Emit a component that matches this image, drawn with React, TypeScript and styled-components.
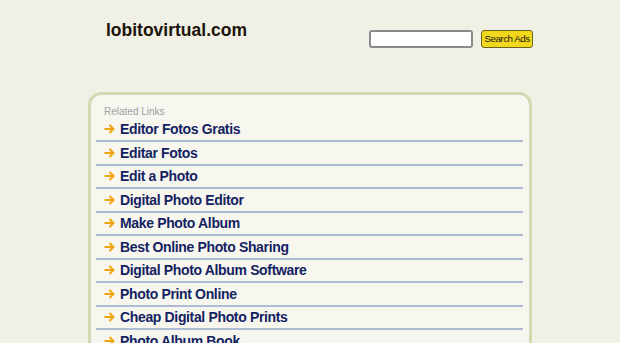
import React from "react";
import styled, { createGlobalStyle } from "styled-components";

const Global = createGlobalStyle`
  html, body { margin: 0; padding: 0; background: #f0f0e4; }
  body { font-family: "Liberation Sans", Arial, sans-serif; overflow: hidden; }
`;

const Page = styled.div`
  width: 620px;
  height: 343px;
  overflow: hidden;
  display: flex;
  flex-direction: column;
`;

const Header = styled.div`
  display: flex;
  align-items: flex-start;
  justify-content: space-between;
  padding: 19px 87px 0 106px;
  height: 92px;
  flex-shrink: 0;
  box-sizing: border-box;
`;

const Logo = styled.div`
  font-size: 17.5px;
  font-weight: bold;
  color: #1c140c;
  line-height: 22px;
`;

const SearchForm = styled.div`
  display: flex;
  align-items: center;
  gap: 8px;
  margin-top: 11px;
`;

const SearchInput = styled.input`
  width: 104px;
  height: 18px;
  box-sizing: border-box;
  border: 2px solid #8a8a8a;
  border-radius: 3px;
  background: #ffffff;
  padding: 0 4px;
  outline: none;
`;

const SearchButton = styled.button`
  height: 18px;
  width: 52px;
  box-sizing: border-box;
  padding: 0;
  border: 1px solid #6a6420;
  border-radius: 3px;
  background: #f2d81c;
  color: #1a1a10;
  font-family: "Liberation Sans", Arial, sans-serif;
  font-size: 9.8px;
  letter-spacing: -0.5px;
  line-height: 14px;
  white-space: nowrap;
`;

const Panel = styled.div`
  margin-left: 88px;
  width: 444px;
  box-sizing: border-box;
  border: 3px solid #d2dab4;
  border-bottom: none;
  border-radius: 13px 13px 0 0;
  background: #f7f7f0;
  padding: 10px 6px 0 5px;
  flex: 1;
`;

const Caption = styled.div`
  font-size: 10px;
  color: #a0a0a0;
  padding-left: 8px;
  line-height: 13px;
  margin-bottom: 0.5px;
`;

const List = styled.div`
  display: flex;
  flex-direction: column;
`;

const Row = styled.div`
  display: flex;
  align-items: center;
  gap: 5px;
  padding-left: 8px;
  height: 21.5px;
  flex-shrink: 0;
  border-bottom: 2px solid #aebbd6;
`;

const LinkText = styled.a`
  font-size: 14px;
  letter-spacing: -0.35px;
  font-weight: bold;
  color: #142262;
  text-decoration: none;
  line-height: 18px;
`;

const Arrow = () => (
  <svg width="11" height="10" viewBox="0 0 11 10">
    <path d="M0.5 5 H9.5 M5.5 1 L9.5 5 L5.5 9" fill="none" stroke="#f2a40c" strokeWidth="2" />
  </svg>
);

const links = [
  "Editor Fotos Gratis",
  "Editar Fotos",
  "Edit a Photo",
  "Digital Photo Editor",
  "Make Photo Album",
  "Best Online Photo Sharing",
  "Digital Photo Album Software",
  "Photo Print Online",
  "Cheap Digital Photo Prints",
  "Photo Album Book",
];

export default function App() {
  return (
    <Page>
      <Global />
      <Header>
        <Logo>lobitovirtual.com</Logo>
        <SearchForm>
          <SearchInput type="text" />
          <SearchButton>Search Ads</SearchButton>
        </SearchForm>
      </Header>
      <Panel>
        <Caption>Related Links</Caption>
        <List>
          {links.map((l) => (
            <Row key={l}>
              <Arrow />
              <LinkText href="#">{l}</LinkText>
            </Row>
          ))}
        </List>
      </Panel>
    </Page>
  );
}
